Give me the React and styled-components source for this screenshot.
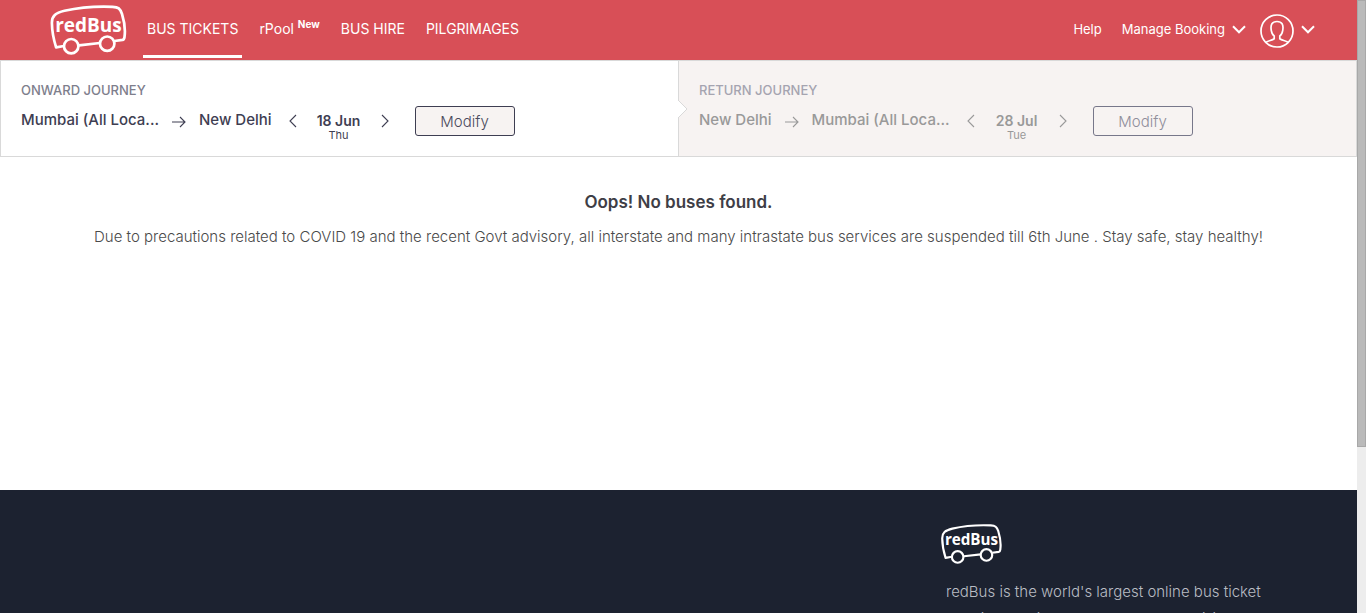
import React from "react";
import styled, { createGlobalStyle } from "styled-components";

const GlobalStyle = createGlobalStyle`
  * { box-sizing: border-box; }
  body { margin: 0; background: #fff; font-family: Inter, "Open Sans", sans-serif; color: #3e3e52; }
  a { color: inherit; text-decoration: none; }
  button { font: inherit; color: inherit; cursor: pointer; }
  svg { display: block; flex: none; }
`;

const Viewport = styled.div`
  display: flex;
  height: 100vh;
  overflow: hidden;
`;

const Page = styled.div`
  flex: 1;
  min-width: 0;
  display: flex;
  flex-direction: column;
`;

const ScrollTrack = styled.div`
  width: 9px;
  flex: none;
  background: #ededed;
`;

const ScrollThumb = styled.div`
  height: 73%;
  background: #bababa;
  border: 1px solid #a8a8a8;
`;

const Header = styled.header`
  display: flex;
  justify-content: space-between;
  flex: none;
  height: 60px;
  padding: 0 42px 0 50px;
  background: #d84f57;
  color: #fff;
`;

const Brand = styled.div`
  display: flex;
`;

const LogoLink = styled.a`
  display: block;
  padding-top: 5px;
`;

const Nav = styled.nav`
  display: flex;
  gap: 13px;
  margin-left: 16px;
`;

const NavLink = styled.a`
  height: 58px;
  padding: 0 4px;
  border-bottom: 3px solid ${(p) => (p.$active ? "#fff" : "transparent")};
  font-size: 14px;
  line-height: 58px;
  white-space: nowrap;
`;

const NewTag = styled.sup`
  font-size: 10px;
  font-weight: 700;
  line-height: 1;
`;

const Account = styled.div`
  display: flex;
  align-items: center;
  gap: 20px;
  height: 58px;
  font-size: 13px;
`;

const MenuButton = styled.button`
  display: flex;
  align-items: center;
  gap: 7px;
  padding: 0;
  border: 0;
  background: none;
  line-height: 20px;
`;

const AccountMenus = styled.div`
  display: flex;
  align-items: center;
  gap: 14px;
`;

const AvatarFrame = styled.span`
  padding-top: 4px;
`;

const Journeys = styled.section`
  display: flex;
  flex: none;
  border: 1px solid #d9d9d9;
`;

const Journey = styled.div`
  position: relative;
  flex: 1;
  height: 95px;
  padding: 20px;
  background: ${(p) => (p.$muted ? "#f7f3f2" : "#fff")};
  border-left: ${(p) => (p.$muted ? "1px solid #d9d9d9" : "0")};
  color: ${(p) => (p.$muted ? "#999" : "#3e3e52")};
`;

const Notch = styled.svg`
  position: absolute;
  left: -1px;
  top: 39px;
`;

const JourneyLabel = styled.h2`
  margin: 0;
  color: ${(p) => (p.$muted ? "#a5a4b0" : "#7e7e8c")};
  font-size: 13px;
  font-weight: 500;
  line-height: 19px;
`;

const JourneyRow = styled.div`
  display: flex;
  align-items: center;
  height: 42px;
`;

const City = styled.span`
  padding-bottom: 3px;
  font-size: 15px;
  font-weight: 500;
  white-space: nowrap;
`;

const Arrow = styled.svg`
  margin: 1px 13px 0;
`;

const Stepper = styled.div`
  display: flex;
  justify-content: space-between;
  align-items: center;
  width: 100px;
  margin: 0 26px 0 17px;
`;

const StepButton = styled.button`
  display: flex;
  padding: 0;
  border: 0;
  background: none;
`;

const DateText = styled.time`
  padding-top: 12px;
  text-align: center;
  font-size: 14px;
  font-weight: 600;
  line-height: 16px;
`;

const Weekday = styled.span`
  display: block;
  font-size: 11px;
  font-weight: 400;
  line-height: 12px;
`;

const ModifyButton = styled.button`
  width: 100px;
  height: 30px;
  padding: 0;
  border: 1px solid ${(p) => (p.$muted ? "#77778a" : "#3e3e52")};
  border-radius: 3px;
  background: #f7f3f2;
  color: ${(p) => (p.$muted ? "#8f8e9b" : "#4a4a5c")};
  font-size: 15px;
  font-weight: 300;
`;

const Results = styled.main`
  flex: none;
  height: 333px;
  padding-top: 32px;
  text-align: center;
`;

const ResultsTitle = styled.h1`
  margin: 0;
  font-size: 17px;
  font-weight: 600;
  line-height: 26px;
  color: #3e3e46;
`;

const ResultsText = styled.p`
  margin: 10px 0 0;
  color: #4a4a4a;
  font-size: 15px;
  font-weight: 300;
  line-height: 24px;
`;

const Footer = styled.footer`
  display: flex;
  justify-content: flex-end;
  flex: 1;
  min-height: 0;
  overflow: hidden;
  padding: 34px 81px 0 0;
  background: #1c2230;
`;

const FooterAbout = styled.div`
  width: 335px;
  color: #b9bdc4;
`;

const FooterText = styled.p`
  margin: 14px 0 0 5px;
  font-size: 15px;
  font-weight: 300;
  line-height: 27px;
`;

function Logo({ width, height }) {
  return (
    <svg width={width} height={height} viewBox="0 0 76 50" fill="none" stroke="#fff" strokeWidth="2.7" role="img" aria-label="redBus">
      <path d="M13.5 41 5.6 42.3C3 34 1.5 26 1.4 18 1.3 11 5 8 14 5.8 30 2.2 48 1.2 62 1.8 68 2 69.5 3.5 71.5 9 74 17 75 25 74 32 73.8 34 73 34.7 72 34.9L64 36M28.5 40.3 49.5 38" strokeLinejoin="round" />
      <circle cx="20.7" cy="41.2" r="7.2" />
      <circle cx="56.7" cy="38.7" r="7.2" />
      <text x="38" y="26.5" textAnchor="middle" fill="#fff" stroke="none" fontFamily="Open Sans, sans-serif" fontSize="19" fontWeight="700">redBus</text>
    </svg>
  );
}

function ChevronDown() {
  return (
    <svg width="14" height="9" viewBox="0 0 14 9" fill="none" stroke="#fff" strokeWidth="2" aria-hidden="true">
      <path d="M1 1.3 7 7.3 13 1.3" />
    </svg>
  );
}

function Avatar() {
  return (
    <svg width="34" height="34" viewBox="0 0 34 34" fill="none" stroke="#fff" strokeWidth="1.7" aria-hidden="true">
      <circle cx="17" cy="17" r="16" />
      <path d="M6 28.3C8.5 26.6 12 26.4 14.2 24.8V22C11.8 20.5 11.6 18.5 11.2 16 10.4 10.5 12 7.5 17 7.5S23.6 10.5 22.8 16C22.4 18.5 22.2 20.5 19.8 22V24.8C22 26.4 25.5 26.6 28 28.3" />
    </svg>
  );
}

function Step({ next, label }) {
  return (
    <StepButton type="button" aria-label={label}>
      <svg width="8" height="14" viewBox="0 0 8 14" fill="none" stroke="currentColor" strokeWidth="1.1">
        <path d={next ? "M1 1 7 7 1 13" : "M7 1 1 7 7 13"} />
      </svg>
    </StepButton>
  );
}

function JourneyPanel({ label, from, to, date, day, muted }) {
  return (
    <Journey $muted={muted}>
      {muted && (
        <Notch width="10" height="18" viewBox="0 0 10 18" aria-hidden="true">
          <path d="M0 0 9 9 0 18" fill="#fff" stroke="#d9d9d9" />
        </Notch>
      )}
      <JourneyLabel $muted={muted}>{label}</JourneyLabel>
      <JourneyRow>
        <City>{from}</City>
        <Arrow width="14" height="12" viewBox="0 0 14 12" fill="none" stroke="currentColor" strokeWidth="1.1" aria-hidden="true">
          <path d="M0 6H13M8 1 13 6 8 11" />
        </Arrow>
        <City>{to}</City>
        <Stepper>
          <Step label="Previous day" />
          <DateText>
            {date}
            <Weekday>{day}</Weekday>
          </DateText>
          <Step next label="Next day" />
        </Stepper>
        <ModifyButton type="button" $muted={muted}>Modify</ModifyButton>
      </JourneyRow>
    </Journey>
  );
}

export default function App() {
  return (
    <Viewport>
      <GlobalStyle />
      <Page>
        <Header>
          <Brand>
            <LogoLink href="#home"><Logo width="77" height="50" /></LogoLink>
            <Nav>
              <NavLink href="#tickets" $active>BUS TICKETS</NavLink>
              <NavLink href="#rpool">rPool <NewTag>New</NewTag></NavLink>
              <NavLink href="#hire">BUS HIRE</NavLink>
              <NavLink href="#pilgrimages">PILGRIMAGES</NavLink>
            </Nav>
          </Brand>
          <Account>
            <a href="#help">Help</a>
            <AccountMenus>
              <MenuButton type="button">Manage Booking <ChevronDown /></MenuButton>
              <MenuButton type="button" aria-label="Account">
                <AvatarFrame><Avatar /></AvatarFrame>
                <ChevronDown />
              </MenuButton>
            </AccountMenus>
          </Account>
        </Header>
        <Journeys>
          <JourneyPanel label="ONWARD JOURNEY" from="Mumbai (All Loca..." to="New Delhi" date="18 Jun" day="Thu" />
          <JourneyPanel muted label="RETURN JOURNEY" from="New Delhi" to="Mumbai (All Loca..." date="28 Jul" day="Tue" />
        </Journeys>
        <Results>
          <ResultsTitle>Oops! No buses found.</ResultsTitle>
          <ResultsText>
            Due to precautions related to COVID 19 and the recent Govt advisory, all interstate and many intrastate bus services are suspended till 6th June . Stay safe, stay healthy!
          </ResultsText>
        </Results>
        <Footer>
          <FooterAbout>
            <Logo width="61" height="40" />
            <FooterText>redBus is the world's largest online bus ticket booking service trusted by over 17 million</FooterText>
          </FooterAbout>
        </Footer>
      </Page>
      <ScrollTrack><ScrollThumb /></ScrollTrack>
    </Viewport>
  );
}
